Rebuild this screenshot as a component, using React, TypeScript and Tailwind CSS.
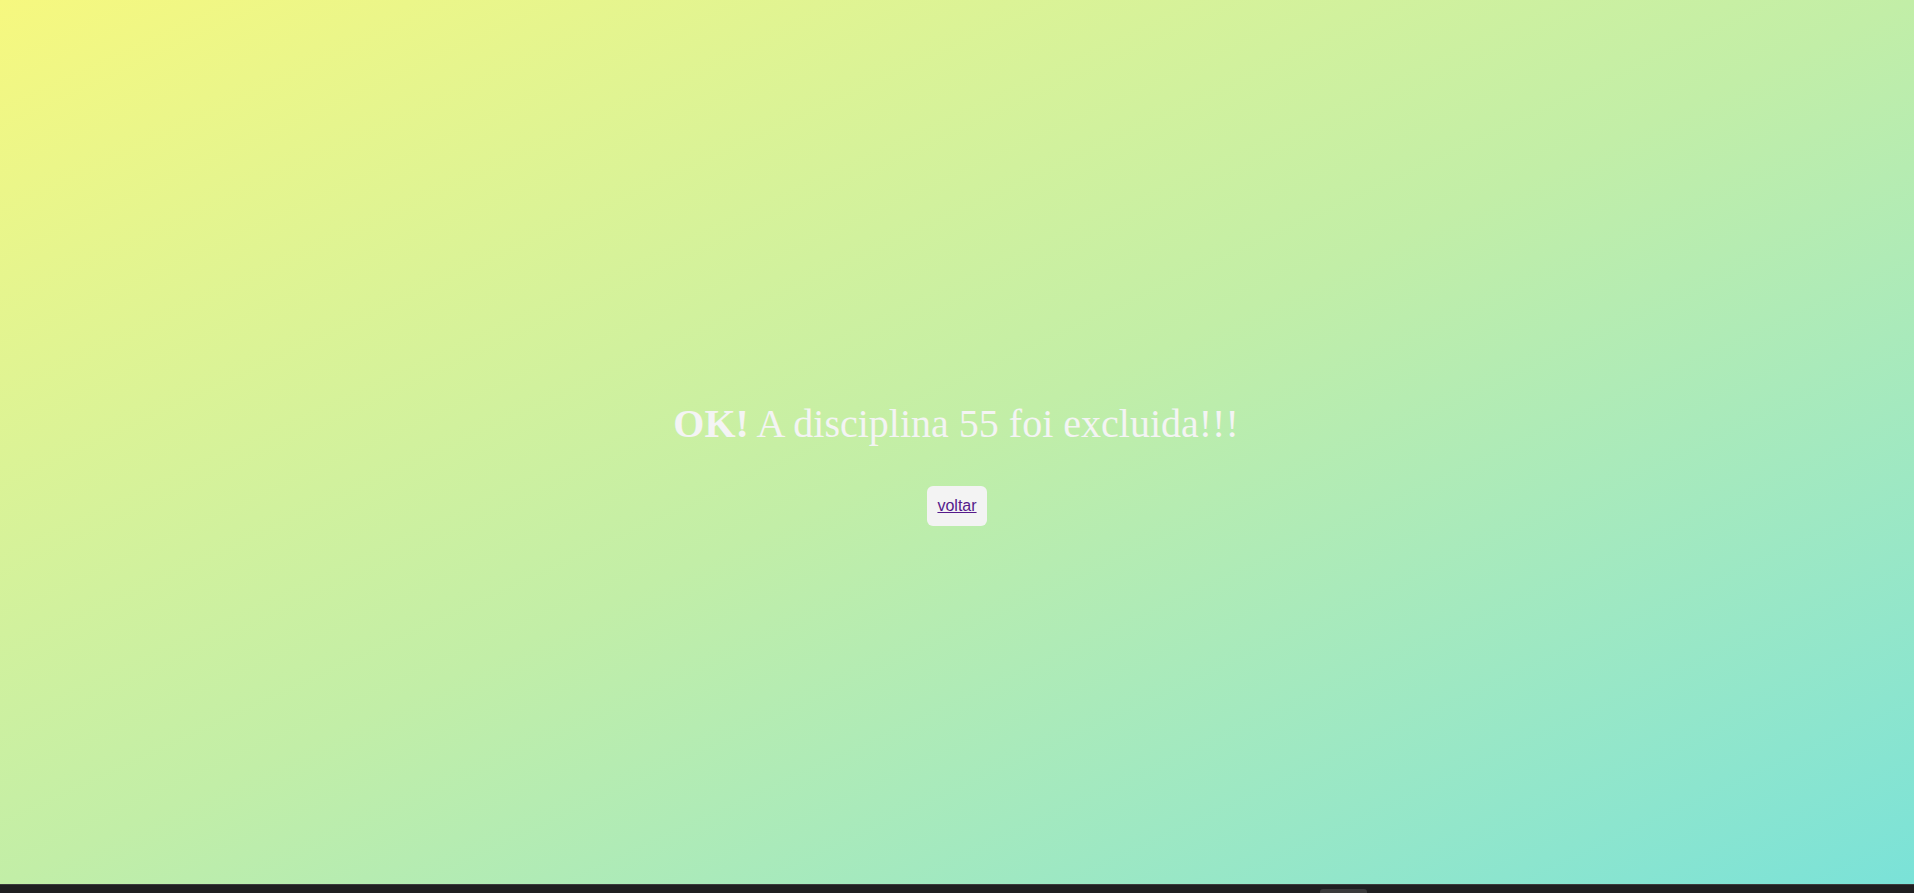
export default function App() {
  return (
    <div className="flex h-[893px] w-full flex-col overflow-hidden">
      <main className="flex h-[884px] flex-col items-center bg-gradient-to-br from-[#f6f87f] via-[#c2eea7] to-[#7ae2d8] pt-[401px]">
        <h1 className="pr-[2px] font-['Liberation_Serif',serif] text-[40px] leading-[46px] text-[#f4f4f4]">
          <strong className="font-bold">OK!</strong> A disciplina 55 foi excluida!!!
        </h1>
        <div className="mt-[39px] flex h-[40px] w-[60px] items-center justify-center rounded-[6px] bg-[#f3f3f3]">
          <a href="#" className="font-['Liberation_Sans',Arial,sans-serif] text-[16px] leading-[18px] text-[#551a8b] underline">
            voltar
          </a>
        </div>
      </main>
      <div className="flex h-[9px] items-end border-t border-[#3b3b3d] bg-[#1f1f21] pl-[1320px]">
        <div className="h-[4px] w-[47px] rounded-t-[3px] bg-[#3a3a3c]" />
      </div>
    </div>
  );
}
